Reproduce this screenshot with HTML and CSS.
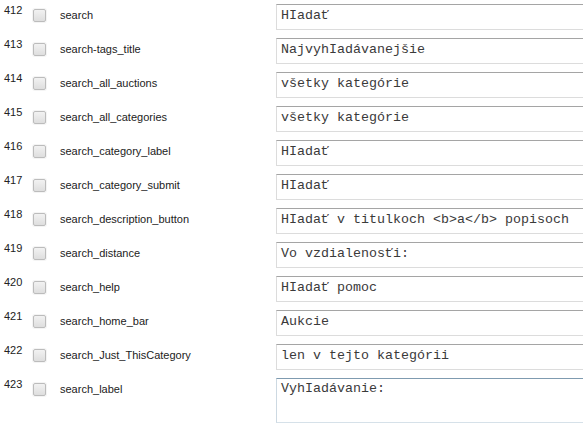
FILE: index.html
```html
<!DOCTYPE html>
<html>
<head>
<meta charset="utf-8">
<link rel="stylesheet" href="styles.css">
</head>
<body>
<div class="list">
  <div class="row"><div class="num">412</div><div class="chk"><span class="box"></span></div><div class="key">search</div><div class="val"><div class="field">HIadať</div></div></div>
  <div class="row"><div class="num">413</div><div class="chk"><span class="box"></span></div><div class="key">search-tags_title</div><div class="val"><div class="field">NajvyhIadávanejšie</div></div></div>
  <div class="row"><div class="num">414</div><div class="chk"><span class="box"></span></div><div class="key">search_all_auctions</div><div class="val"><div class="field">všetky kategórie</div></div></div>
  <div class="row"><div class="num">415</div><div class="chk"><span class="box"></span></div><div class="key">search_all_categories</div><div class="val"><div class="field">všetky kategórie</div></div></div>
  <div class="row"><div class="num">416</div><div class="chk"><span class="box"></span></div><div class="key">search_category_label</div><div class="val"><div class="field">HIadať</div></div></div>
  <div class="row"><div class="num">417</div><div class="chk"><span class="box"></span></div><div class="key">search_category_submit</div><div class="val"><div class="field">HIadať</div></div></div>
  <div class="row"><div class="num">418</div><div class="chk"><span class="box"></span></div><div class="key">search_description_button</div><div class="val"><div class="field">HIadať v titulkoch &lt;b&gt;a&lt;/b&gt; popisoch</div></div></div>
  <div class="row"><div class="num">419</div><div class="chk"><span class="box"></span></div><div class="key">search_distance</div><div class="val"><div class="field">Vo vzdialenosťi:</div></div></div>
  <div class="row"><div class="num">420</div><div class="chk"><span class="box"></span></div><div class="key">search_help</div><div class="val"><div class="field">HIadať pomoc</div></div></div>
  <div class="row"><div class="num">421</div><div class="chk"><span class="box"></span></div><div class="key">search_home_bar</div><div class="val"><div class="field">Aukcie</div></div></div>
  <div class="row"><div class="num">422</div><div class="chk"><span class="box"></span></div><div class="key">search_Just_ThisCategory</div><div class="val"><div class="field">len v tejto kategórii</div></div></div>
  <div class="row last"><div class="num">423</div><div class="chk"><span class="box"></span></div><div class="key">search_label</div><div class="val"><div class="field area">VyhIadávanie:</div></div></div>
</div>
</body>
</html>
```
FILE: styles.css
```css
html, body {
  margin: 0;
  padding: 0;
  background: #ffffff;
  overflow: hidden;
}
.list {
  display: flex;
  flex-direction: column;
  font-family: "Liberation Sans", Arial, sans-serif;
  font-size: 11px;
  color: #222222;
}
.row {
  display: flex;
  height: 34px;
  padding-top: 4px;
  box-sizing: border-box;
  flex-shrink: 0;
}
.row.last {
  height: auto;
}
.num {
  flex: 0 0 29px;
  padding-left: 4px;
  line-height: 13px;
}
.chk {
  flex: 0 0 27px;
  padding-top: 5px;
}
.box {
  display: block;
  width: 11px;
  height: 11px;
  border: 1px solid #bcbcbc;
  border-radius: 2px;
  background: linear-gradient(#f2f2f2, #dedede);
  box-shadow: 0 0 0 1px #f4f4f4;
}
.key {
  flex: 0 0 216px;
  padding-top: 5px;
  line-height: 13px;
}
.val {
  flex: 1 1 auto;
  min-width: 0;
  overflow: hidden;
}
.field {
  width: 340px;
  height: 26px;
  box-sizing: border-box;
  border: 1px solid #dcdcdc;
  border-top-color: #a5a5a5;
  padding: 3px 4px 0;
  font-family: "Liberation Mono", "Courier New", monospace;
  font-size: 13.333px;
  line-height: 15px;
  color: #3a3a3a;
  white-space: nowrap;
}
.area {
  height: 45px;
  padding-top: 2px;
  border-color: #cdd9e2;
  border-top-color: #7f9bb0;
  border-bottom-color: #d6e1e9;
}
```
